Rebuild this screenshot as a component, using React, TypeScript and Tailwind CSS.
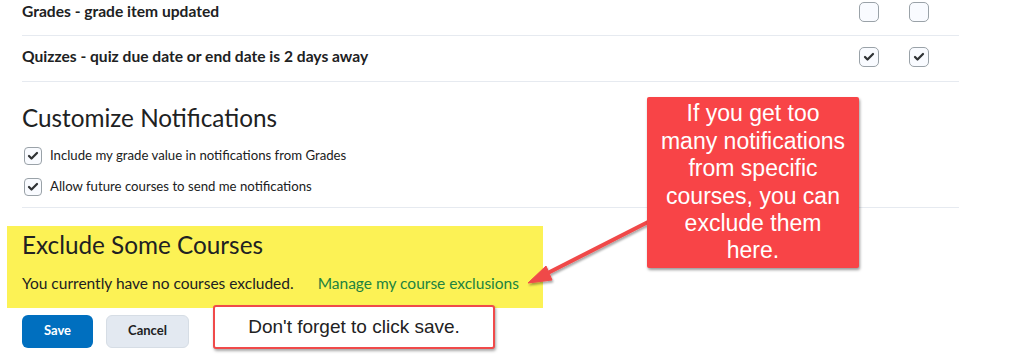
import { Check } from "lucide-react"

function Box({ checked, small }: { checked?: boolean; small?: boolean }) {
  return (
    <div
      className={`flex items-center justify-center border border-[#9aa2a8] bg-[#f9fbff] ${
        small ? "h-[18px] w-[18px] rounded-[4px]" : "h-[20px] w-[20px] rounded-[5px]"
      }`}
    >
      {checked && <Check className="h-[12px] w-[12px] text-[#2f3235]" strokeWidth={4.5} />}
    </div>
  )
}

function PrefRow({ label, checked, className }: { label: string; checked?: boolean; className: string }) {
  return (
    <div className={`flex items-center justify-between border-b border-[#e6eaf0] ${className}`}>
      <span className="text-[15.6px] font-bold">{label}</span>
      <div className="flex gap-[30px] pr-[30px]">
        <Box checked={checked} />
        <Box checked={checked} />
      </div>
    </div>
  )
}

export default function App() {
  return (
    <div className="relative h-[355px] w-[1024px] overflow-hidden bg-white font-['Lato',sans-serif] text-[#202122]">
      <div className="ml-[22px] w-[937px]">
        <PrefRow label="Grades - grade item updated" className="h-[36px] pb-[12px]" />
        <PrefRow label="Quizzes - quiz due date or end date is 2 days away" checked className="h-[46px] pb-[4px]" />

        <h2 className="mt-[20px] text-[24.3px] leading-[32px]">Customize Notifications</h2>
        <div className="mt-[12px] flex flex-col gap-[11px] pl-[2px] pb-[10px] border-b border-[#e6eaf0] text-[13.2px]">
          <label className="flex items-center gap-[8px]">
            <Box checked small />
            <span>Include my grade value in notifications from Grades</span>
          </label>
          <label className="flex items-center gap-[8px]">
            <Box checked small />
            <span>Allow future courses to send me notifications</span>
          </label>
        </div>
      </div>

      <section className="ml-[7px] mt-[18px] h-[82px] w-[536px] bg-[#fcf255] pl-[15px] pt-[4px]">
        <h2 className="text-[24.3px] leading-[30px]">Exclude Some Courses</h2>
        <p className="mt-[12px] flex gap-[24px] text-[15.5px]">
          <span>You currently have no courses excluded.</span>
          <a className="text-[#218240]">Manage my course exclusions</a>
        </p>
      </section>

      <div className="ml-[22px] mt-[7px] flex gap-[13px]">
        <button className="h-[33px] w-[71px] rounded-[6px] bg-[#006fbf] text-[13px] font-bold text-white">Save</button>
        <button className="h-[33px] w-[83px] rounded-[6px] border border-[#d6dde5] bg-[#e3e9f1] text-[13px] font-bold">
          Cancel
        </button>
      </div>

      <svg className="absolute left-0 top-0" width="1024" height="355" viewBox="0 0 1024 355">
        <defs>
          <filter id="sh" x="-20%" y="-20%" width="140%" height="160%">
            <feDropShadow dx="1" dy="2" stdDeviation="1.2" floodColor="#000" floodOpacity="0.35" />
          </filter>
        </defs>
        <g filter="url(#sh)" stroke="#f04a4a" fill="#f04a4a">
          <line x1="650" y1="221" x2="536" y2="279" strokeWidth="4" strokeLinecap="round" />
          <polygon points="528,283 546,266 552,280" strokeWidth="1" strokeLinejoin="round" />
        </g>
      </svg>

      <div className="absolute left-[647px] top-[97px] flex h-[171px] w-[212px] items-center justify-center rounded-[2px] bg-[#f84447] text-center font-['Liberation_Sans',Arial,sans-serif] text-[23px] leading-[27.4px] text-white shadow-[1px_2px_3px_rgba(0,0,0,0.4)]">
        If you get too
        <br />
        many notifications
        <br />
        from specific
        <br />
        courses, you can
        <br />
        exclude them
        <br />
        here.
      </div>

      <div className="absolute left-[213px] top-[305px] flex h-[44px] w-[282px] items-center justify-center rounded-[3px] border-2 border-[#f04a4a] bg-white font-['Liberation_Sans',Arial,sans-serif] text-[19px] text-[#222] shadow-[1px_2px_3px_rgba(0,0,0,0.35)]">
        Don't forget to click save.
      </div>
    </div>
  )
}
